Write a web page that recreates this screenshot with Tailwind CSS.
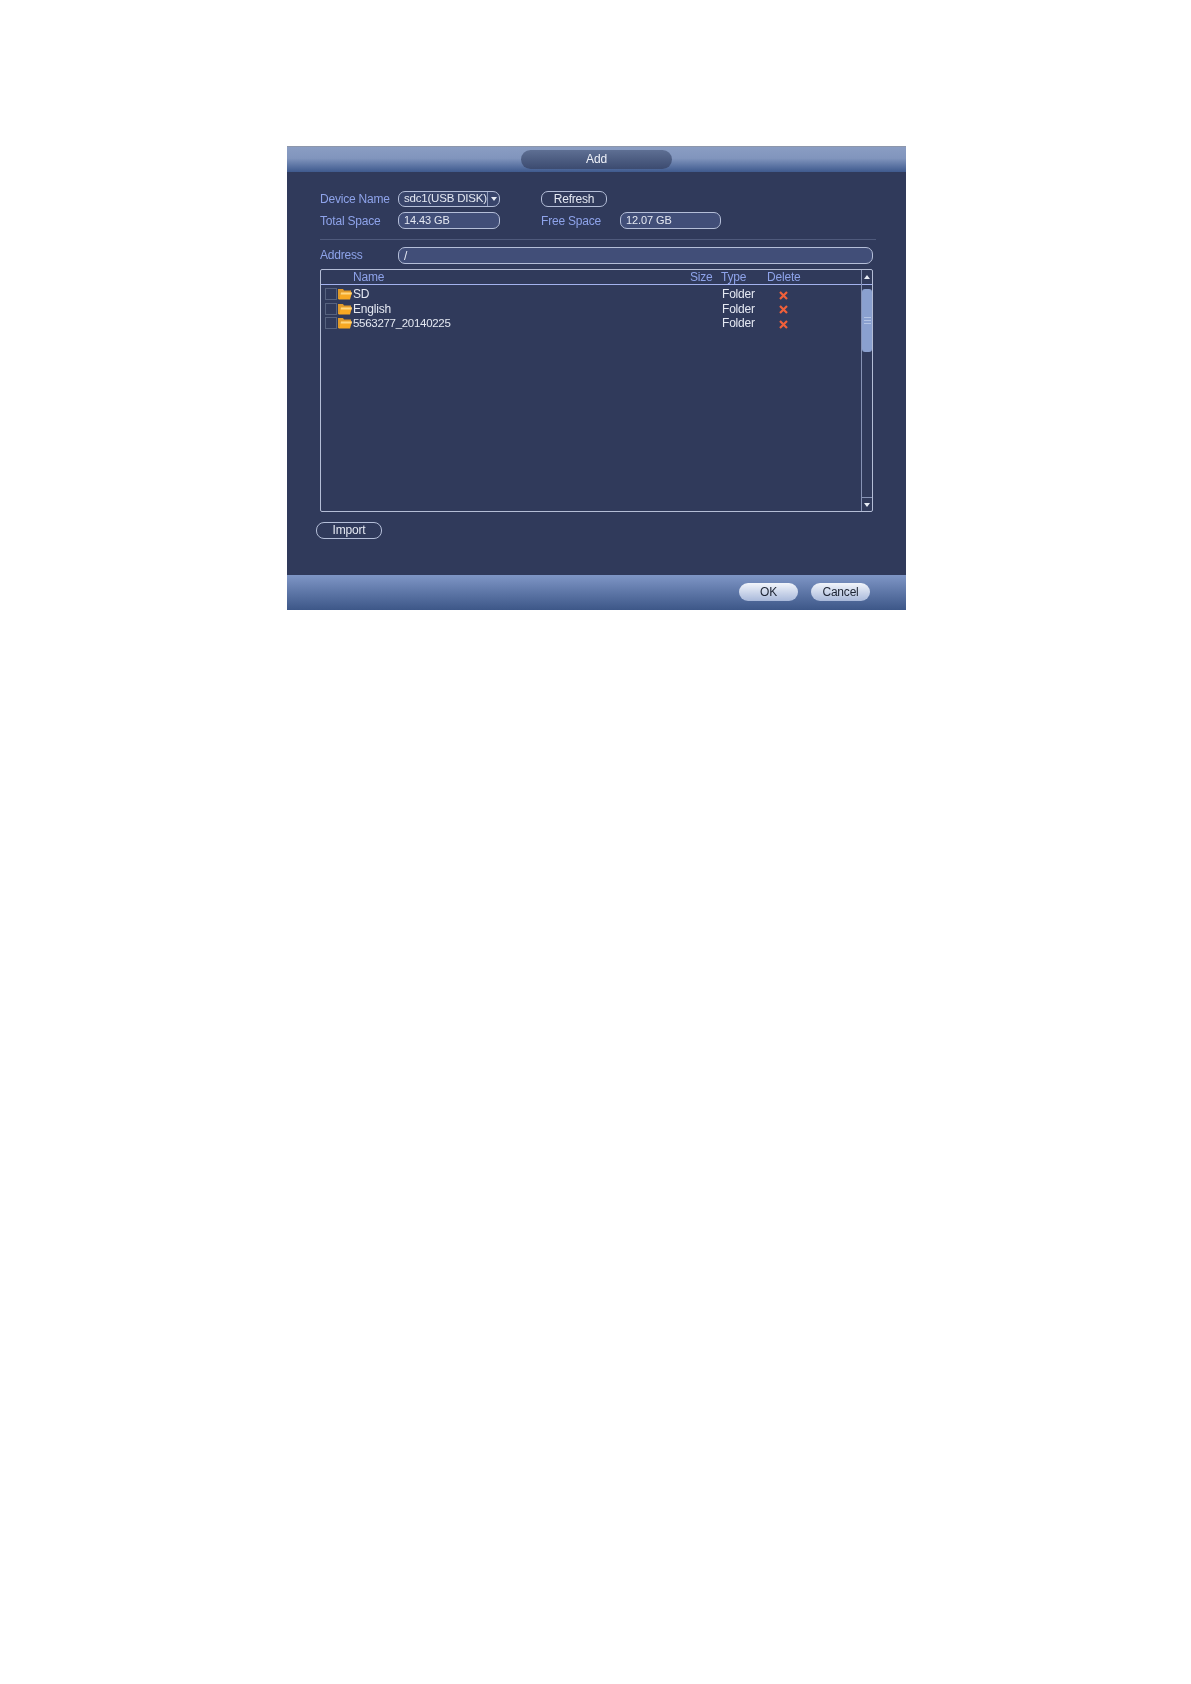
<!DOCTYPE html>
<html lang="en">
<head>
    <meta charset="UTF-8">
    <title>Add</title>
    <script src="https://cdn.jsdelivr.net/npm/@tailwindcss/browser@4"></script>
</head>
<body class="bg-white font-['Liberation_Sans',Arial,sans-serif] text-[12px] tracking-[-0.2px] leading-none">
    <div class="h-[1684px] pt-[146px] pl-[287px]">
        <div class="w-[619px] h-[464px] flex flex-col bg-[#303a5b] blur-[0.4px]">
            <!-- title bar -->
            <div class="h-[26px] flex justify-center pt-[3px] border-t border-[#8d97ab] bg-linear-to-b from-[#8a9dc3] via-[#8195bd] via-45% to-[#3f5a8e]">
                <div class="w-[151px] h-[19px] pb-[2px] rounded-[10px] bg-linear-to-b from-[#5e6f93] to-[#3c4b70] flex items-center justify-center text-[#eef1f8]">Add</div>
            </div>

            <div class="flex-1 pl-[33px] pt-[19px]">
                <div class="flex items-center h-[16px]">
                    <span class="w-[78px] text-[#8ea3ea]">Device Name</span>
                    <div class="w-[102px] h-[16px] flex items-center justify-between rounded-[7px] border border-[#b4bed8] bg-[#38446a] pl-[5px] text-[#e4e8f2]">
                        <span class="whitespace-nowrap text-[11.5px] tracking-[-0.2px]">sdc1(USB DISK)</span>
                        <span class="h-full w-[12px] shrink-0 border-l border-[#8f9bbb] flex items-center justify-center">
                            <svg width="6" height="4" viewBox="0 0 6 4"><path d="M0 0h6L3 4z" fill="#e8ecf5"/></svg>
                        </span>
                    </div>
                    <div class="ml-[41px] w-[66px] h-[16px] flex items-center justify-center rounded-[7px] border border-[#b4bed8] bg-[#303a5b] text-[#e4e8f2]">Refresh</div>
                </div>
                <div class="flex items-center h-[17px] mt-[5px]">
                    <span class="w-[78px] text-[#8ea3ea]">Total Space</span>
                    <div class="w-[102px] h-[17px] flex items-center rounded-[7px] border border-[#b4bed8] bg-[#414e78] pl-[5px] text-[#e4e8f2] text-[11px] tracking-[-0.1px]">14.43 GB</div>
                    <span class="ml-[41px] w-[79px] text-[#8ea3ea]">Free Space</span>
                    <div class="w-[101px] h-[17px] flex items-center rounded-[7px] border border-[#b4bed8] bg-[#414e78] pl-[5px] text-[#e4e8f2] text-[11px] tracking-[-0.1px]">12.07 GB</div>
                </div>
                <div class="w-[556px] h-px mt-[10px] bg-[#4f5a7c]"></div>
                <div class="flex items-center h-[17px] mt-[7px]">
                    <span class="w-[78px] pb-[2px] text-[#8ea3ea]">Address</span>
                    <div class="w-[475px] h-[17px] flex items-center rounded-[7px] border border-[#b4bed8] bg-[#414e78] pl-[5px] text-[#e4e8f2]">/</div>
                </div>

                <!-- file list -->
                <div class="flex w-[553px] h-[243px] mt-[5px] border border-[#b4bdd6] rounded-[2px]">
                    <div class="flex-1">
                        <div class="grid grid-cols-[369px_31px_46px_94px] h-[15px] items-center border-b border-[#a3b2ee] text-[#8ea3ea]">
                            <span class="pl-[32px]">Name</span>
                            <span>Size</span>
                            <span>Type</span>
                            <span>Delete</span>
                        </div>
                        <div class="pt-[2px] text-[#e4e8f2]">
                            <div class="grid grid-cols-[369px_31px_46px_94px] h-[14.5px] items-center">
                                <span class="flex items-center pl-[4px]">
                                    <span class="w-[12px] h-[12px] border border-[#56627f]"></span>
                                    <svg class="ml-[1px] mr-[1px]" width="14" height="12" viewBox="0 0 14 12"><path d="M0 1h5l1 1.500h7V5H3L1 11H0z" fill="#e09a2a"/><path d="M3 4.500h11l-2 7H0.500z" fill="#f7a823"/><path d="M3 4.500h11L13.500 6.500H2.400z" fill="#ffd67e"/></svg>
                                    <span>SD</span>
                                </span>
                                <span></span>
                                <span class="pl-[1px]">Folder</span>
                                <span class="pl-[11px] pt-[2px]">
                                    <svg width="11" height="11" viewBox="0 0 11 11"><path d="M2 2l7 7M9 2L2 9" stroke="#f0603a" stroke-width="2.200"/></svg>
                                </span>
                            </div>
                            <div class="grid grid-cols-[369px_31px_46px_94px] h-[14.5px] items-center">
                                <span class="flex items-center pl-[4px]">
                                    <span class="w-[12px] h-[12px] border border-[#56627f]"></span>
                                    <svg class="ml-[1px] mr-[1px]" width="14" height="12" viewBox="0 0 14 12"><path d="M0 1h5l1 1.500h7V5H3L1 11H0z" fill="#e09a2a"/><path d="M3 4.500h11l-2 7H0.500z" fill="#f7a823"/><path d="M3 4.500h11L13.500 6.500H2.400z" fill="#ffd67e"/></svg>
                                    <span>English</span>
                                </span>
                                <span></span>
                                <span class="pl-[1px]">Folder</span>
                                <span class="pl-[11px] pt-[2px]">
                                    <svg width="11" height="11" viewBox="0 0 11 11"><path d="M2 2l7 7M9 2L2 9" stroke="#f0603a" stroke-width="2.200"/></svg>
                                </span>
                            </div>
                            <div class="grid grid-cols-[369px_31px_46px_94px] h-[14.5px] items-center">
                                <span class="flex items-center pl-[4px]">
                                    <span class="w-[12px] h-[12px] border border-[#56627f]"></span>
                                    <svg class="ml-[1px] mr-[1px]" width="14" height="12" viewBox="0 0 14 12"><path d="M0 1h5l1 1.500h7V5H3L1 11H0z" fill="#e09a2a"/><path d="M3 4.500h11l-2 7H0.500z" fill="#f7a823"/><path d="M3 4.500h11L13.500 6.500H2.400z" fill="#ffd67e"/></svg>
                                    <span class="text-[11.5px] tracking-[-0.3px]">5563277_20140225</span>
                                </span>
                                <span></span>
                                <span class="pl-[1px]">Folder</span>
                                <span class="pl-[11px] pt-[2px]">
                                    <svg width="11" height="11" viewBox="0 0 11 11"><path d="M2 2l7 7M9 2L2 9" stroke="#f0603a" stroke-width="2.200"/></svg>
                                </span>
                            </div>
                        </div>
                    </div>
                    <!-- scrollbar -->
                    <div class="w-[11px] flex flex-col border-l border-[#8793b5]">
                        <div class="h-[15px] flex items-center justify-center border-b border-[#a3b2ee]">
                            <svg width="6" height="4" viewBox="0 0 6 4"><path d="M3 0l3 4H0z" fill="#e8ecf5"/></svg>
                        </div>
                        <div class="flex-1 pt-[4px]">
                            <div class="h-[63px] rounded-[3px] bg-[#8aa0cf] flex flex-col items-center justify-center gap-[2px]">
                                <div class="w-[7px] h-px bg-[#b4c4e4]"></div>
                                <div class="w-[7px] h-px bg-[#b4c4e4]"></div>
                                <div class="w-[7px] h-px bg-[#b4c4e4]"></div>
                            </div>
                        </div>
                        <div class="h-[14px] flex items-center justify-center border-t border-[#8793b5]">
                            <svg width="6" height="4" viewBox="0 0 6 4"><path d="M0 0h6L3 4z" fill="#e8ecf5"/></svg>
                        </div>
                    </div>
                </div>

                <div class="w-[66px] h-[17px] mt-[10px] -ml-[4px] pb-[2px] flex items-center justify-center rounded-[8px] border border-[#b4bed8] bg-[#303a5b] text-[#e4e8f2]">Import</div>
            </div>

            <!-- footer -->
            <div class="h-[35px] flex items-start justify-end gap-[13px] pt-[8px] pr-[36px] bg-linear-to-b from-[#7f96c6] to-[#3d5788]">
                <div class="w-[59px] h-[18px] rounded-[9px] bg-linear-to-b from-[#f2f5fb] to-[#a9b9da] flex items-center justify-center text-[#1d2433]">OK</div>
                <div class="w-[59px] h-[18px] rounded-[9px] bg-linear-to-b from-[#f2f5fb] to-[#a9b9da] flex items-center justify-center text-[#1d2433]">Cancel</div>
            </div>
        </div>
    </div>
</body>
</html>
